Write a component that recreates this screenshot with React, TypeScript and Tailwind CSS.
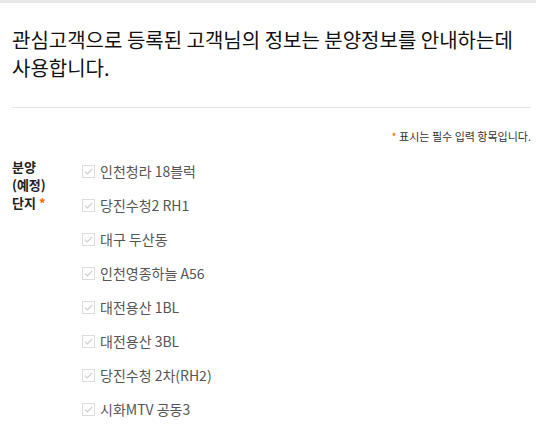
import React from "react";

const items = [
  "인천청라 18블럭",
  "당진수청2 RH1",
  "대구 두산동",
  "인천영종하늘 A56",
  "대전용산 1BL",
  "대전용산 3BL",
  "당진수청 2차(RH2)",
  "시화MTV 공동3",
];

function Check() {
  return (
    <span className="flex h-[13px] w-[13px] shrink-0 items-center justify-center border border-[#dcdcdc] bg-white">
      <svg width="11" height="11" viewBox="0 0 11 11" fill="none">
        <path d="M2 5.6 L4.4 8 L9 3" stroke="#cfcfcf" strokeWidth="1.2" />
      </svg>
    </span>
  );
}

export default function App() {
  return (
    <div
      className="min-h-[439px] w-full border-t-[3px] border-[#e6e6e6] bg-white pl-3 pr-[5px] pt-[23px]"
      style={{ fontFamily: '"Noto Sans CJK KR", "Noto Sans", sans-serif' }}
    >
      <h2 className="border-b border-[#e5e5e5] pb-[25px] text-[20px] font-normal leading-[28px] text-[#111]">
        관심고객으로 등록된 고객님의 정보는 분양정보를 안내하는데 사용합니다.
      </h2>
      <p className="mt-[20px] text-right text-[11px] leading-[16px] text-[#333]">
        <span className="text-[#ff6600]">*</span> 표시는 필수 입력 항목입니다.
      </p>
      <div className="mt-[14px] flex">
        <div className="w-[70px] shrink-0 text-[13px] font-bold leading-[18px] text-[#222]">
          분양
          <br />
          (예정)
          <br />
          단지 <span className="text-[#ff6600]">*</span>
        </div>
        <ul className="flex flex-col gap-[14px] pt-[3px]">
          {items.map((t) => (
            <li key={t} className="flex h-[20px] items-center gap-[5px] text-[14px] text-[#555]">
              <Check />
              <span className="leading-[20px]">{t}</span>
            </li>
          ))}
        </ul>
      </div>
    </div>
  );
}
